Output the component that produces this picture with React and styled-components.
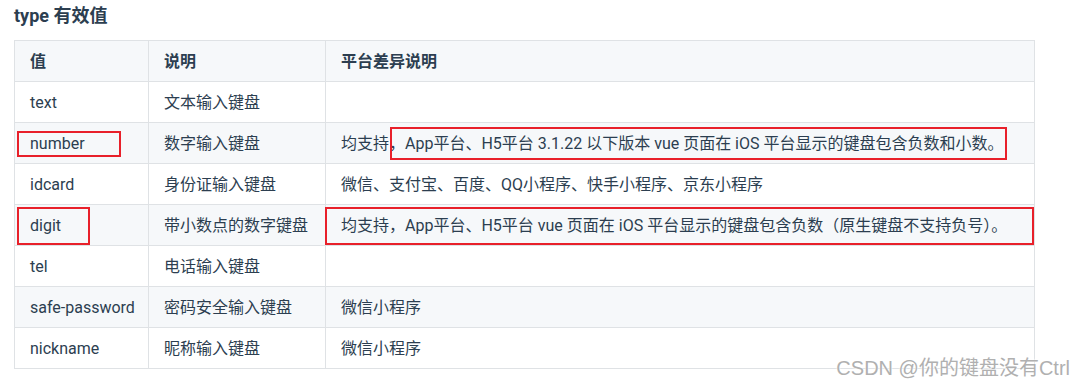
import React from "react";
import styled, { createGlobalStyle } from "styled-components";

const GlobalStyle = createGlobalStyle`
  body {
    margin: 0;
    background: #fff;
    font-family: Roboto, "Noto Sans CJK SC", sans-serif;
    color: #2c3e50;
  }
`;

const Page = styled.div`
  position: relative;
  width: 1075px;
  height: 386px;
  padding: 0 0 0 14px;
  box-sizing: border-box;
  overflow: hidden;
`;

const Heading = styled.h3`
  margin: 0;
  padding-top: 4px;
  height: 36px;
  font-size: 18px;
  line-height: 24px;
  font-weight: 700;
  color: #2c3e50;
`;

const TableWrap = styled.div`
  position: relative;
  width: 1021px;
`;

const Table = styled.table`
  border-collapse: collapse;
  width: 1021px;
  table-layout: fixed;
  font-size: 16px;
`;

const Row = styled.tr`
  background: ${(p) => (p.$striped ? "#f6f8fa" : "#fff")};
`;

const Cell = styled.td`
  border: 1px solid #dfe2e5;
  padding: 2px 15px 0;
  height: 38px;
  line-height: 38px;
  white-space: nowrap;
  text-align: left;
  font-weight: ${(p) => (p.$head ? 700 : 400)};
  color: #2c3e50;
`;

const Mark = styled.div`
  position: absolute;
  left: ${(p) => p.$x}px;
  top: ${(p) => p.$y}px;
  width: ${(p) => p.$w}px;
  height: ${(p) => p.$h}px;
  border: 2px solid #e8202a;
  box-sizing: border-box;
  pointer-events: none;
`;

const Watermark = styled.div`
  position: absolute;
  right: 5px;
  top: 356px;
  font-family: "Liberation Sans", "Noto Sans CJK SC", sans-serif;
  font-size: 20px;
  line-height: 24px;
  color: #b0b0b0;
  text-shadow: 0 0 2px #fff, 0 0 2px #fff;
`;

const rows = [
  ["text", "文本输入键盘", ""],
  [
    "number",
    "数字输入键盘",
    "均支持，App平台、H5平台 3.1.22 以下版本 vue 页面在 iOS 平台显示的键盘包含负数和小数。",
  ],
  ["idcard", "身份证输入键盘", "微信、支付宝、百度、QQ小程序、快手小程序、京东小程序"],
  [
    "digit",
    "带小数点的数字键盘",
    "均支持，App平台、H5平台 vue 页面在 iOS 平台显示的键盘包含负数（原生键盘不支持负号）。",
  ],
  ["tel", "电话输入键盘", ""],
  ["safe-password", "密码安全输入键盘", "微信小程序"],
  ["nickname", "昵称输入键盘", "微信小程序"],
];

const App = () => {
  return (
    <Page>
      <GlobalStyle />
      <Heading>type 有效值</Heading>
      <TableWrap>
        <Table>
          <colgroup>
            <col style={{ width: 134 }} />
            <col style={{ width: 177 }} />
            <col />
          </colgroup>
          <thead>
            <Row $striped>
              <Cell as="th" $head>值</Cell>
              <Cell as="th" $head>说明</Cell>
              <Cell as="th" $head>平台差异说明</Cell>
            </Row>
          </thead>
          <tbody>
            {rows.map((r, i) => (
              <Row key={r[0]} $striped={i % 2 === 1}>
                <Cell>{r[0]}</Cell>
                <Cell>{r[1]}</Cell>
                <Cell>{r[2]}</Cell>
              </Row>
            ))}
          </tbody>
        </Table>

        <Mark $x={3} $y={91} $w={104} $h={26} />
        <Mark $x={376} $y={87} $w={617} $h={33} />
        <Mark $x={3} $y={167} $w={73} $h={38} />
        <Mark $x={311} $y={167} $w={709} $h={38} />
      </TableWrap>
      <Watermark>CSDN @你的键盘没有Ctrl</Watermark>
    </Page>
  );
};

export default App;
